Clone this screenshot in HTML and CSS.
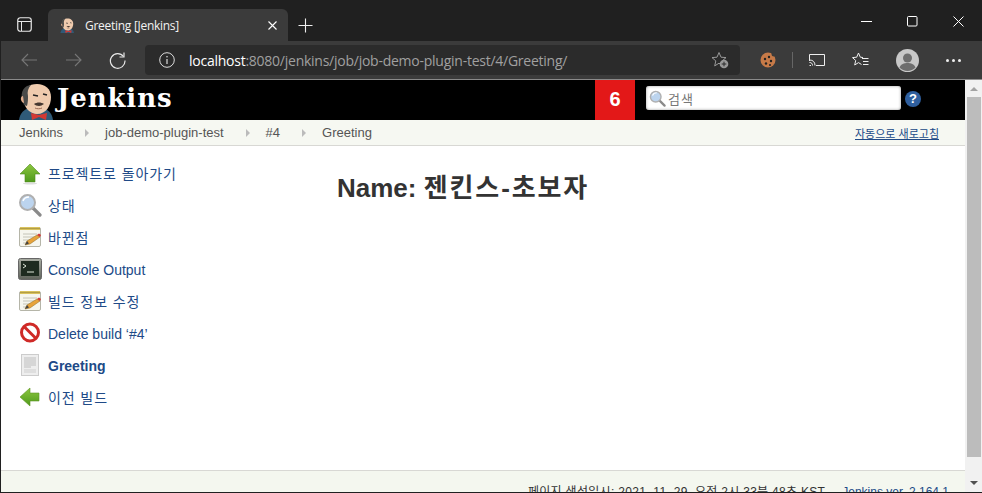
FILE: index.html
```html
<!DOCTYPE html>
<html lang="ko">
<head>
    <meta charset="UTF-8">
    <meta name="viewport" content="width=device-width, initial-scale=1.0">
    <title>Greeting [Jenkins]</title>
    <link rel="stylesheet" href="styles.css">
</head>
<body>
    <svg class="defs" width="0" height="0" aria-hidden="true">
        <defs>
            <linearGradient id="green" x1="0" y1="0" x2="0" y2="1">
                <stop offset="0" stop-color="#8cc63f"/>
                <stop offset="1" stop-color="#4f9a1c"/>
            </linearGradient>
            <linearGradient id="bezel" x1="0" y1="0" x2="0" y2="1">
                <stop offset="0" stop-color="#a9ada3"/>
                <stop offset="1" stop-color="#5f635b"/>
            </linearGradient>
        </defs>
        <symbol id="butler" viewBox="0 0 40 40">
            <path d="M1 40c1-7 5-11 11-12h12c6 1 10 5 11 12z" fill="#2f5a78"/>
            <path d="M5 17C5 8 11 4 19 4c8 0 14 5 14 13 0 9-5 17-14 17C11 34 5 26 5 17z" fill="#efcbae"/>
            <path d="M6 25C2 18 3 9 9 6l4-1c-3 3-4 7-3 11 0 3 0 6-1 10z" fill="#4a4a48"/>
            <path d="M5 16c-3 0-3 6 1 7z" fill="#e2ad8c"/>
            <path d="M16 24c3-2 7-2 10 0-2 1-3 2-5 2-2 0-4-1-5-2z" fill="#453730"/>
            <path d="M17 28c2 1 5 1 7 0" stroke="#9a6a55" fill="none"/>
            <path d="M15 15l5 1M25 14l4 1" stroke="#222" stroke-width="1.500" fill="none"/>
            <path d="M13 33l8 2 8-2-1 7-7-3-7 3z" fill="#d33833"/>
        </symbol>
        <symbol id="magnifier" viewBox="0 0 24 24">
            <path d="M15 15l7 7" stroke="#8a8a8a" stroke-width="3.200" stroke-linecap="round"/>
            <circle cx="9.500" cy="9.500" r="7.500" fill="#bcd4ee" stroke="#b0b0b0" stroke-width="2"/>
            <path d="M5 8c1-3 3-4 6-4" stroke="#fff" stroke-width="1.500" fill="none"/>
        </symbol>
        <symbol id="notepad" viewBox="0 0 24 24">
            <rect x="1.500" y="2.500" width="21" height="19" rx="1.500" fill="#f6f6ee" stroke="#b5b5a8"/>
            <rect x="2" y="2" width="20" height="3" fill="#d9c25e"/>
            <path d="M2.500 3.500h19" stroke="#8a7a30" stroke-dasharray="1 1"/>
            <path d="M5 9h14M5 12h11M5 15h8M5 18h6" stroke="#c4c4b8"/>
            <path d="M7 20l2-4 10-6 3 2-10 7z" fill="#e8a33a" stroke="#8a6a20" stroke-width=".5"/>
            <path d="M19 10l3 2 1-2-2-1.500z" fill="#d33833"/>
            <path d="M7 20l2-4 2 2.500z" fill="#444"/>
        </symbol>
    </svg>

    <div class="window">
        <div class="tabstrip">
            <div class="tab-toggle">
                <svg width="15" height="15" viewBox="0 0 15 15"><rect x=".75" y=".75" width="13.500" height="13.500" rx="2.500" fill="none" stroke="#e8e8e8" stroke-width="1.200"/><path d="M1 4.500h13M4.500 4.500v9.500" stroke="#e8e8e8" stroke-width="1"/></svg>
            </div>
            <div class="tab">
                <svg class="favicon" width="16" height="16"><use href="#butler"/></svg>
                <span class="tab-title">Greeting [Jenkins]</span>
                <svg class="tab-close" width="9" height="9" viewBox="0 0 9 9"><path d="M.5.500l8 8M8.500.500l-8 8" stroke="#fff" stroke-width="1.100"/></svg>
            </div>
            <div class="tab-new">
                <svg width="15" height="15" viewBox="0 0 15 15"><path d="M7.500.500v14M.5 7.500h14" stroke="#eee" stroke-width="1.100"/></svg>
            </div>
            <div class="win-buttons">
                <svg width="11" height="11" viewBox="0 0 11 11"><path d="M0 5.500h11" stroke="#fff"/></svg>
                <svg width="11" height="11" viewBox="0 0 11 11"><rect x=".5" y=".5" width="9.500" height="9.500" rx="1" fill="none" stroke="#fff"/></svg>
                <svg width="11" height="11" viewBox="0 0 11 11"><path d="M.5.500l10 10M10.500.500l-10 10" stroke="#fff"/></svg>
            </div>
        </div>

        <div class="toolbar">
            <svg class="nav-icon" width="17" height="14" viewBox="0 0 17 14"><path d="M16 7H1M7 1L1 7l6 6" fill="none" stroke="#777" stroke-width="1.100"/></svg>
            <svg class="nav-icon" width="17" height="14" viewBox="0 0 17 14"><path d="M1 7h15M10 1l6 6-6 6" fill="none" stroke="#777" stroke-width="1.100"/></svg>
            <svg class="nav-icon" width="17" height="17" viewBox="0 0 17 17"><path d="M14.500 4.500A7.300 7.300 0 1 0 16 8.500" fill="none" stroke="#e8e8e8" stroke-width="1.200"/><path d="M15 .5v4.500h-4.500" fill="none" stroke="#e8e8e8" stroke-width="1.200"/></svg>
            <div class="address">
                <svg width="16" height="16" viewBox="0 0 16 16"><circle cx="8" cy="8" r="7.300" fill="none" stroke="#ddd" stroke-width="1"/><path d="M8 7v5" stroke="#ddd" stroke-width="1.200"/><circle cx="8" cy="4.700" r=".8" fill="#ddd"/></svg>
                <span class="url"><b>localhost</b>:8080/jenkins/job/job-demo-plugin-test/4/Greeting/</span>
                <svg class="fav-add" width="18" height="18" viewBox="0 0 18 18"><path d="M8 1.500l2 4.700 5 .4-3.800 3.300 1.200 5-4.400-2.700-4.300 2.700 1.100-5L1 6.600l5-.4z" fill="none" stroke="#999"/><circle cx="13" cy="13" r="4.300" fill="#999"/><path d="M13 10.700v4.600M10.700 13h4.600" stroke="#2b2b2b"/></svg>
            </div>
            <div class="tools">
                <svg width="16" height="16" viewBox="0 0 16 16"><circle cx="8" cy="8" r="7.500" fill="#c67a48"/><circle cx="14" cy="2" r="2.500" fill="#3b3b3b"/><g fill="#222"><circle cx="5" cy="7" r="1.200"/><circle cx="9" cy="5" r="1.200"/><circle cx="11" cy="9" r="1.200"/><circle cx="6" cy="11.500" r="1.200"/><circle cx="10" cy="13" r="1"/></g></svg>
                <span class="tool-sep"></span>
                <svg width="16" height="12" viewBox="0 0 16 12"><path d="M.5 7V.5h15v11H7" fill="none" stroke="#eee"/><path d="M.5 11.500h1.500M.5 8.500c2 0 3 1 3 3M.5 6c3.500 0 5.500 2 5.500 5.500" fill="none" stroke="#eee"/></svg>
                <svg class="tool-wide" width="17" height="16" viewBox="0 0 17 16"><path d="M6.500 1l1.800 4.200 2.700.3M6.500 1L4.700 5.200.5 5.600l3.200 2.900-1 4.500 3.800-2.400 3 1.900" fill="none" stroke="#eee"/><path d="M10 6.500h6.500M11 9.500h5.500M11 12.500h5.500" stroke="#eee"/></svg>
                <svg class="tool-wide" width="23" height="23" viewBox="0 0 23 23"><circle cx="11.500" cy="11.500" r="11.500" fill="#c8c8c8"/><circle cx="11.500" cy="9" r="4.500" fill="#6e6e6e"/><path d="M3.500 18.500c1.500-3.500 4.500-4.500 8-4.500s6.500 1 8 4.500a11 11 0 0 1-16 0z" fill="#6e6e6e"/></svg>
                <span class="more tool-wide"><i></i><i></i><i></i></span>
            </div>
        </div>

        <div class="viewport">
            <div class="page">
                <header class="page-head">
                    <svg class="logo" width="40" height="40"><use href="#butler"/></svg>
                    <span class="brand">Jenkins</span>
                    <span class="badge">6</span>
                    <div class="search">
                        <svg width="17" height="17"><use href="#magnifier"/></svg>
                        <span>검색</span>
                    </div>
                    <span class="help">?</span>
                </header>

                <nav class="crumbs">
                    <a>Jenkins</a><i></i>
                    <a>job-demo-plugin-test</a><i></i>
                    <a>#4</a><i></i>
                    <a>Greeting</a>
                    <a class="refresh">자동으로 새로고침</a>
                </nav>

                <div class="body">
                    <ul class="tasks">
                        <li>
                            <svg width="24" height="24" viewBox="0 0 24 24"><path d="M12 3L22 13h-5v8H7v-8H2z" fill="url(#green)" stroke="#4f8a1c" stroke-width=".6"/><ellipse cx="12" cy="22.500" rx="7" ry="1" fill="#ddd"/></svg>
                            <a class="ko">프로젝트로 돌아가기</a>
                        </li>
                        <li>
                            <svg width="24" height="24"><use href="#magnifier"/></svg>
                            <a class="ko">상태</a>
                        </li>
                        <li>
                            <svg width="24" height="24"><use href="#notepad"/></svg>
                            <a class="ko">바뀐점</a>
                        </li>
                        <li>
                            <svg width="24" height="24" viewBox="0 0 24 24"><rect x=".5" y="1.500" width="23" height="21" rx="2" fill="url(#bezel)" stroke="#666"/><rect x="3" y="4" width="18" height="15" fill="#1e2b20"/><path d="M5 7l3 2-3 2" fill="none" stroke="#dfe8da"/><path d="M9 15h7" stroke="#dfe8da"/></svg>
                            <a class="en">Console Output</a>
                        </li>
                        <li>
                            <svg width="24" height="24"><use href="#notepad"/></svg>
                            <a class="ko">빌드 정보 수정</a>
                        </li>
                        <li>
                            <svg width="24" height="24" viewBox="0 0 24 24"><circle cx="12" cy="11.500" r="8.500" fill="#fff" stroke="#cf2a27" stroke-width="3"/><path d="M6 5.500l12 12" stroke="#cf2a27" stroke-width="3"/></svg>
                            <a class="en">Delete build ‘#4’</a>
                        </li>
                        <li class="active">
                            <svg width="24" height="24" viewBox="0 0 24 24"><rect x="3.500" y="1.500" width="17" height="21" fill="#eee" stroke="#ccc"/><path d="M6 4h12v9h-5v2H6z" fill="#d6d6d6"/><rect x="6" y="16" width="12" height="4" fill="#dedede"/></svg>
                            <a class="en">Greeting</a>
                        </li>
                        <li>
                            <svg width="24" height="24" viewBox="0 0 24 24"><path d="M2 12l10-9v5h9v8h-9v5z" fill="url(#green)" stroke="#5f9626" stroke-width=".6"/></svg>
                            <a class="ko">이전 빌드</a>
                        </li>
                    </ul>
                    <main class="content">
                        <h1>Name: <span class="ko-title">젠킨스-초보자</span></h1>
                    </main>
                </div>

                <footer class="page-foot">
                    <span class="stamp">페이지 생성일시: 2021. 11. 29. 오전 2시 33분 48초 KST</span>
                    <a>Jenkins ver. 2.164.1</a>
                </footer>
            </div>

            <div class="scrollbar">
                <span class="arrow-up"></span>
                <span class="thumb"></span>
                <span class="arrow-down"></span>
            </div>
        </div>
    </div>
</body>
</html>
```
FILE: styles.css
```css
html, body {
    margin: 0;
    height: 100%;
    overflow: hidden;
}

body {
    font-family: "Liberation Sans", "Noto Sans CJK KR", sans-serif;
    font-size: 14px;
    color: #333;
    background: #fff;
}

svg {
    flex: none;
    display: block;
}

.defs {
    position: absolute;
}

.window {
    height: 493px;
    box-sizing: border-box;
    border: solid #202020;
    border-width: 0 0 1px 1px;
    display: flex;
    flex-direction: column;
    overflow: hidden;
}

/* browser chrome */
.tabstrip {
    height: 41px;
    flex: none;
    background: #202020;
    display: flex;
    align-items: flex-end;
}

.tab-toggle {
    width: 47px;
    height: 32px;
    display: flex;
    align-items: center;
    justify-content: center;
    padding-bottom: 1px;
    box-sizing: border-box;
}

.tab {
    width: 240px;
    height: 32px;
    box-sizing: border-box;
    padding: 0 11px 0 12px;
    background: #3b3b3b;
    border-radius: 6px 6px 0 0;
    display: flex;
    align-items: center;
}

.tab-title {
    margin-left: 9px;
    flex: 1;
    font: 12px "Open Sans", sans-serif;
    letter-spacing: -.28px;
    color: #f2f2f2;
}

.tab-new {
    width: 34px;
    height: 32px;
    display: flex;
    align-items: center;
    justify-content: center;
}

.win-buttons {
    margin-left: auto;
    height: 41px;
    padding-right: 18px;
    box-sizing: border-box;
    padding-top: 1px;
    display: flex;
    align-items: center;
    gap: 35px;
}

.toolbar {
    height: 38px;
    flex: none;
    background: #3b3b3b;
    border-bottom: 1px solid #8a8a8a;
    display: flex;
    align-items: center;
    padding-left: 20px;
    gap: 27px;
}

.address {
    width: 595px;
    height: 30px;
    margin-left: -8px;
    box-sizing: border-box;
    padding: 0 11px 0 14px;
    background: #2b2b2b;
    border-radius: 4px;
    display: flex;
    align-items: center;
}

.url {
    margin-left: 14px;
    flex: 1;
    font: 14px "Open Sans", sans-serif;
    letter-spacing: -.25px;
    color: #a0a0a0;
}

.url b {
    font-weight: 400;
    color: #fff;
}

.tools {
    display: flex;
    align-items: center;
    margin-left: -7px;
    gap: 16px;
}

.tool-wide {
    margin-left: 11px;
}

.tool-sep {
    width: 1px;
    height: 16px;
    background: #666;
}

.more {
    display: flex;
    gap: 3px;
}

.more i {
    width: 3px;
    height: 3px;
    border-radius: 50%;
    background: #eee;
}

/* page */
.viewport {
    flex: 1;
    min-height: 0;
    display: flex;
}

.page {
    flex: 1;
    min-width: 0;
    display: flex;
    flex-direction: column;
}

.page-head {
    height: 40px;
    flex: none;
    background: #000;
    display: flex;
    align-items: center;
    padding-left: 17px;
    overflow: hidden;
}

.brand {
    margin-left: -1px;
    width: 538px;
    padding-bottom: 4px;
    font: bold 26px "DejaVu Serif", serif;
    letter-spacing: .9px;
    color: #fff;
}

.badge {
    width: 40px;
    height: 40px;
    background: #e31818;
    color: #fff;
    font: bold 20px/38px "Liberation Sans", sans-serif;
    text-align: center;
}

.search {
    width: 255px;
    height: 24px;
    margin: 0 0 4px 11px;
    box-sizing: border-box;
    padding-left: 3px;
    background: #fff;
    border-radius: 3px;
    box-shadow: inset 0 0 3px #999;
    display: flex;
    align-items: center;
    gap: 2px;
    color: #777;
    font-size: 13px;
    letter-spacing: 1px;
}

.help {
    width: 16px;
    height: 16px;
    margin: 0 0 2px 4px;
    border-radius: 50%;
    background: #2f5f9e;
    color: #fff;
    font: bold 13px/16px "Liberation Sans", sans-serif;
    text-align: center;
}

.crumbs {
    height: 26px;
    flex: none;
    box-sizing: border-box;
    padding-left: 18px;
    background: #f6f8f2;
    border-bottom: 1px solid #d8d8d4;
    display: flex;
    align-items: center;
    font-size: 13px;
    color: #555;
}

.crumbs i {
    width: 0;
    height: 0;
    margin: 0 16px 0 22px;
    border: solid transparent;
    border-width: 4px 0 4px 4px;
    border-left-color: #bbb;
}

.refresh {
    margin-left: auto;
    margin-right: 26px;
    font-size: 11px;
    color: #204a87;
    text-decoration: underline;
}

.body {
    flex: 1;
    min-height: 0;
    display: flex;
}

.tasks {
    width: 320px;
    flex: none;
    margin: 0;
    padding: 11px 0 0 17px;
    box-sizing: border-box;
    list-style: none;
}

.tasks li {
    height: 32px;
    display: flex;
    align-items: center;
    gap: 6px;
    color: #204a87;
}

.tasks li.active {
    font-weight: bold;
}

.ko {
    letter-spacing: .9px;
}

.en {
    padding-top: 2px;
}

.content {
    flex: 1;
    padding-left: 16px;
}

.content h1 {
    margin: 26px 0 0;
    font-size: 26px;
    line-height: 32px;
    font-weight: bold;
    color: #333;
}

.ko-title {
    letter-spacing: 1.9px;
}

.page-foot {
    height: 22px;
    flex: none;
    box-sizing: border-box;
    padding: 9px 16px 0 0;
    background: #f4f7ef;
    border-top: 1px solid #d8d8d4;
    display: flex;
    justify-content: flex-end;
    gap: 17px;
    font-size: 12px;
    line-height: 24px;
    overflow: hidden;
}

.stamp {
    letter-spacing: .3px;
}

.page-foot a {
    color: #204a87;
}

.scrollbar {
    width: 17px;
    flex: none;
    background: #f1f1f1;
    display: flex;
    flex-direction: column;
    align-items: center;
}

.thumb {
    width: 14px;
    height: 360px;
    background: #bcbcbc;
}

.arrow-up, .arrow-down {
    width: 0;
    height: 0;
    border: solid transparent;
    border-width: 0 4px 4px;
    border-bottom-color: #a3a3a3;
    margin: 7px 0 6px;
}

.arrow-down {
    border-width: 4px 4px 0;
    border-top-color: #505050;
    margin: auto 0 7px;
}
```
